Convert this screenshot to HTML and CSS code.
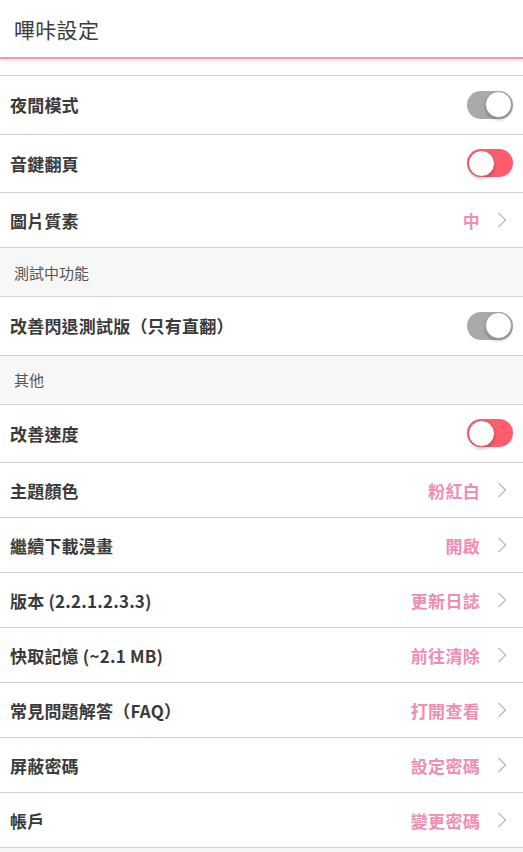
FILE: index.html
```html
<!DOCTYPE html>
<html lang="zh-Hant">
<head>
<meta charset="utf-8">
<link rel="stylesheet" href="styles.css">
</head>
<body>
<header class="appbar"><span class="title">嗶咔設定</span></header>
<div class="spacer"></div>
<div class="list">
  <div class="row tall"><span class="label">夜間模式</span><span class="toggle off"><span class="knob"></span></span></div>
  <div class="row tall"><span class="label">音鍵翻頁</span><span class="toggle pink"><span class="knob"></span></span></div>
  <div class="row"><span class="label">圖片質素</span><span class="value">中</span><svg class="chev" viewBox="0 0 10 16"><polyline points="1.5,1 8.5,8 1.5,15"/></svg></div>
  <div class="section">測試中功能</div>
  <div class="row tall"><span class="label">改善閃退測試版（只有直翻）</span><span class="toggle off"><span class="knob"></span></span></div>
  <div class="section">其他</div>
  <div class="row tall"><span class="label">改善速度</span><span class="toggle pink"><span class="knob"></span></span></div>
  <div class="row"><span class="label">主題顏色</span><span class="value">粉紅白</span><svg class="chev" viewBox="0 0 10 16"><polyline points="1.5,1 8.5,8 1.5,15"/></svg></div>
  <div class="row"><span class="label">繼續下載漫畫</span><span class="value">開啟</span><svg class="chev" viewBox="0 0 10 16"><polyline points="1.5,1 8.5,8 1.5,15"/></svg></div>
  <div class="row"><span class="label">版本 (2.2.1.2.3.3)</span><span class="value">更新日誌</span><svg class="chev" viewBox="0 0 10 16"><polyline points="1.5,1 8.5,8 1.5,15"/></svg></div>
  <div class="row"><span class="label">快取記憶 (~2.1 MB)</span><span class="value">前往清除</span><svg class="chev" viewBox="0 0 10 16"><polyline points="1.5,1 8.5,8 1.5,15"/></svg></div>
  <div class="row"><span class="label">常見問題解答（FAQ）</span><span class="value">打開查看</span><svg class="chev" viewBox="0 0 10 16"><polyline points="1.5,1 8.5,8 1.5,15"/></svg></div>
  <div class="row"><span class="label">屏蔽密碼</span><span class="value">設定密碼</span><svg class="chev" viewBox="0 0 10 16"><polyline points="1.5,1 8.5,8 1.5,15"/></svg></div>
  <div class="row"><span class="label">帳戶</span><span class="value">變更密碼</span><svg class="chev" viewBox="0 0 10 16"><polyline points="1.5,1 8.5,8 1.5,15"/></svg></div>
</div>
</body>
</html>
```

FILE: styles.css
```css
html, body {
  margin: 0;
  padding: 0;
  background: #f5f5f5;
  font-family: "Noto Sans CJK TC", "Noto Sans", sans-serif;
}
.appbar {
  height: 57px;
  background: #fff;
  border-bottom: 2px solid #ee98b3;
  box-shadow: 0 2px 5px rgba(0,0,0,0.12);
  display: flex;
  align-items: center;
  padding-left: 14px;
  position: relative;
  z-index: 1;
}
.title {
  font-size: 21px;
  color: #3c3c3c;
  letter-spacing: 0.3px;
}
.spacer {
  height: 16px;
  background: #fff;
}
.list {
  background: #fff;
  border-top: 1px solid #cfcfcf;
}
.row {
  height: 54px;
  border-bottom: 1px solid #cfcfcf;
  display: flex;
  align-items: center;
  padding: 0 16px 0 10px;
  background: #fff;
}
.row.tall {
  height: 57.5px;
  padding-right: 10px;
}
.label {
  flex: 1;
  font-size: 17px;
  font-weight: bold;
  color: #3a3a3a;
  letter-spacing: 0.2px;
}
.value {
  font-size: 17px;
  font-weight: bold;
  color: #ef8db2;
  margin-right: 17px;
  letter-spacing: 0.3px;
}
.chev {
  width: 10px;
  height: 16px;
  fill: none;
  stroke: #bdbdbd;
  stroke-width: 1.4;
}
.section {
  height: 48px;
  background: #f7f7f7;
  border-bottom: 1px solid #d4d4d4;
  display: flex;
  align-items: center;
  padding-left: 14px;
  font-size: 15px;
  color: #555;
}
.toggle {
  width: 46px;
  height: 28px;
  border-radius: 14px;
  display: flex;
  align-items: center;
  box-sizing: border-box;
  padding: 0 1px;
}
.toggle.off {
  background: #a9a9a9;
  justify-content: flex-end;
}
.toggle.pink {
  background: #ff5d6c;
  justify-content: flex-start;
}
.knob {
  width: 27px;
  height: 27px;
  border-radius: 50%;
  background: #fff;
  box-sizing: border-box;
  box-shadow: 0 2px 3px rgba(0,0,0,0.22);
}
.toggle.off .knob {
  border: 1px solid #9a9a9a;
}
.toggle.pink .knob {
  border: 1.5px solid #e2505f;
}
```
